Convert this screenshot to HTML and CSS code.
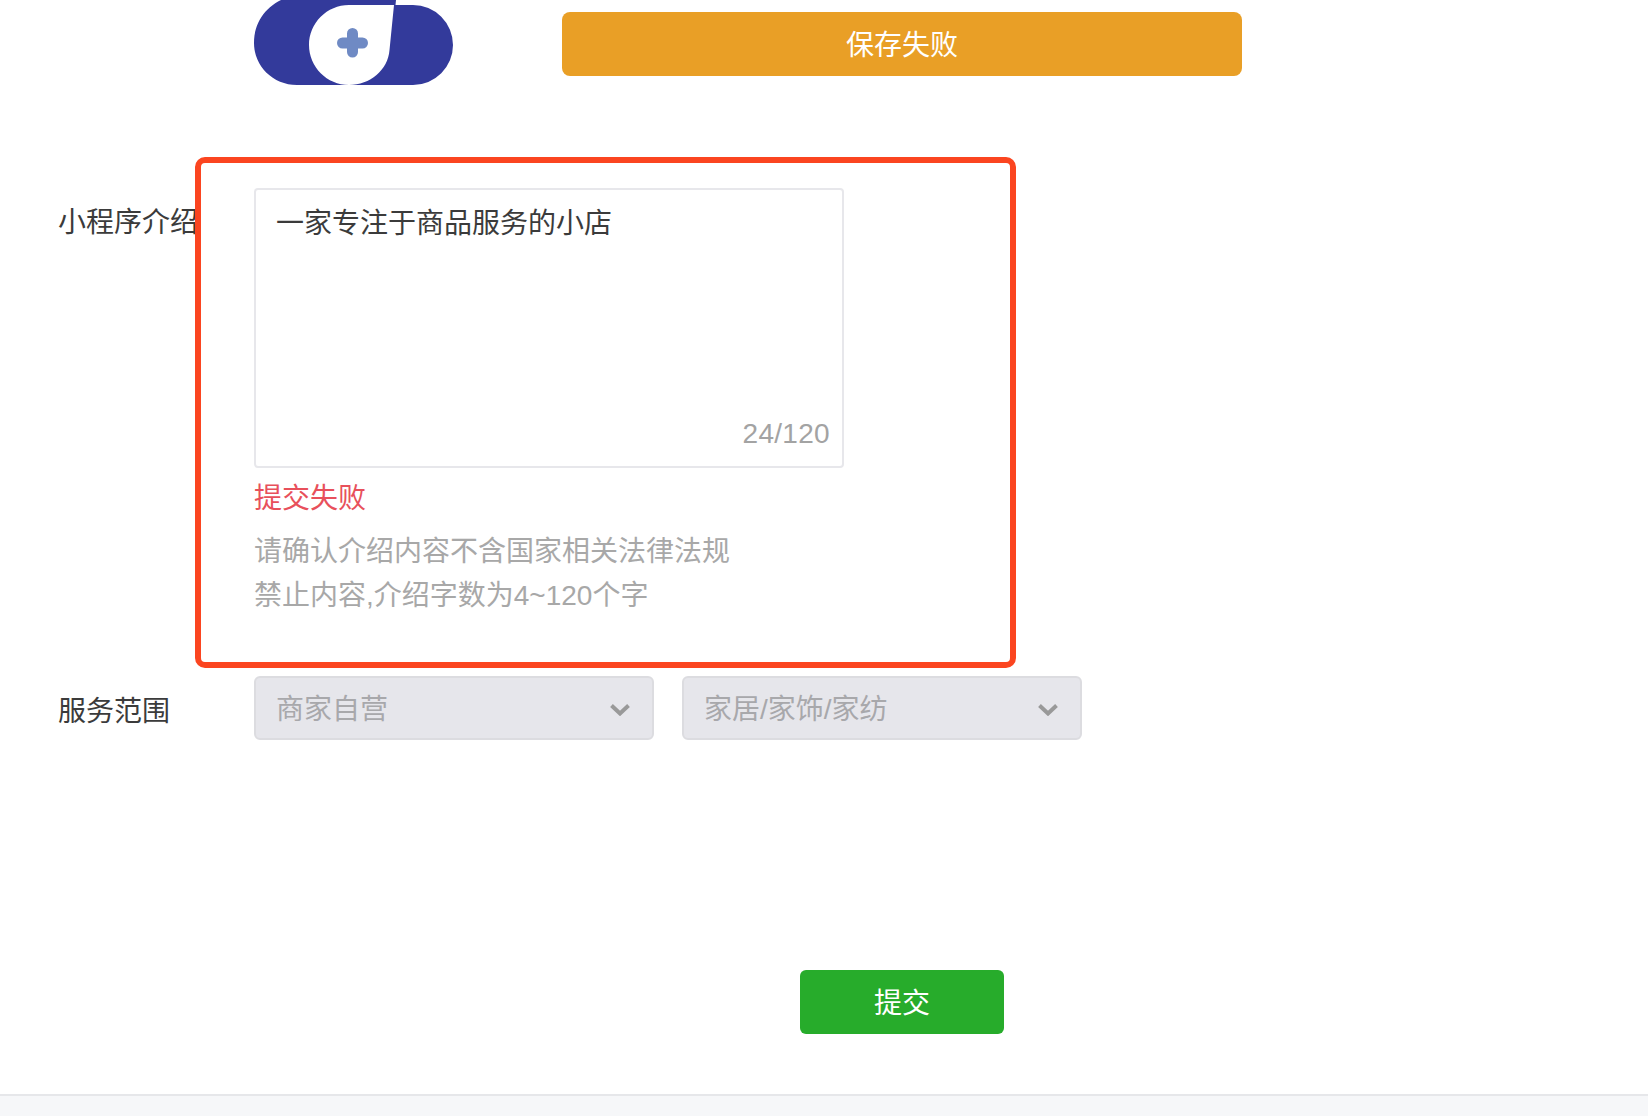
FILE: index.html
```html
<!DOCTYPE html>
<html lang="zh-CN">
<head>
	<meta charset="UTF-8">
	<title>小程序信息</title>
	<link rel="stylesheet" href="styles.css">
</head>
<body>
	<div class="page">
		<div class="logo-row">
			<svg class="logo" width="200" height="86" viewBox="254 0 200 86">
				<path fill="#333a9b" d="M297 85C273 85 254 66 254 43C254 23 265 8 281 0H396L395.5 5H413A40 40 0 0 1 413 85Z"/>
				<path fill="#fff" d="M349 5H394L389.5 50C388 70 370 85 349 85C327 85 309 67 309 45C309 23 327 5 349 5Z"/>
				<path fill="none" stroke="#6f8ac4" stroke-width="11" stroke-linecap="round" d="M342.5 43H362.5M352.5 33.5V52"/>
			</svg>
			<div class="save-status">保存失败</div>
		</div>

		<div class="form-row intro-row">
			<div class="form-label">小程序介绍</div>
			<div class="form-field">
				<div class="textarea-box">
					<div class="textarea-text">一家专注于商品服务的小店</div>
					<div class="textarea-count">24/120</div>
				</div>
				<div class="error-tip">提交失败</div>
				<div class="help-tip">请确认介绍内容不含国家相关法律法规<br>禁止内容,介绍字数为4~120个字</div>
			</div>
		</div>

		<div class="form-row scope-row">
			<div class="form-label">服务范围</div>
			<div class="select-group">
				<div class="select-box">
					<span class="select-text">商家自营</span>
					<svg class="select-arrow" width="20" height="12" viewBox="0 0 20 12"><path fill="none" stroke="#999" stroke-width="4" d="M1.5 1.5L10 9.5L18.5 1.5"/></svg>
				</div>
				<div class="select-box">
					<span class="select-text">家居/家饰/家纺</span>
					<svg class="select-arrow" width="20" height="12" viewBox="0 0 20 12"><path fill="none" stroke="#999" stroke-width="4" d="M1.5 1.5L10 9.5L18.5 1.5"/></svg>
				</div>
			</div>
		</div>

		<div class="submit-row">
			<button class="submit-btn">提交</button>
		</div>

		<div class="footer"></div>

		<div class="mark-box"></div>
	</div>
</body>
</html>
```

FILE: styles.css
```css
html,body{
	margin: 0;
	padding: 0;
	background: #fff;
}
.page{
	position: relative;
	display: flex;
	flex-direction: column;
	width: 1648px;
	height: 1116px;
	overflow: hidden;
	font-family: "Liberation Sans", "Noto Sans CJK SC", sans-serif;
	font-size: 28px;
	line-height: 44px;
	color: #3b3b3b;
}
.logo-row{
	display: flex;
	align-items: flex-start;
	height: 86px;
	padding-left: 254px;
}
.logo{display: block;flex: none;}
.save-status{
	box-sizing: border-box;
	width: 680px;
	height: 64px;
	margin: 12px 0 0 108px;
	padding-top: 2px;
	border-radius: 8px;
	background: #e99f26;
	color: #fff;
	text-align: center;
	line-height: 64px;
}

.form-row{display: flex;align-items: flex-start;}
.form-label{
	flex: none;
	width: 196px;
	padding-left: 58px;
	white-space: nowrap;
}
.intro-row{margin-top: 102px;}
.intro-row .form-label{padding-top: 13px;height: 44px;}
.textarea-box{
	display: flex;
	flex-direction: column;
	justify-content: space-between;
	box-sizing: border-box;
	width: 590px;
	height: 280px;
	padding: 12px 12px 10px 20px;
	border: 2px solid #e7e7eb;
	border-radius: 4px;
}
.textarea-count{align-self: flex-end;color: #a3a3a3;letter-spacing: .3px;}
.error-tip{margin-top: 9px;color: #e8505b;}
.help-tip{margin-top: 9px;color: #a8a8a8;}

.scope-row{margin-top: 58px;align-items: center;height: 64px;}
.scope-row .form-label{padding-top: 8px;}
.select-group{display: flex;gap: 28px;}
.select-box{
	display: flex;
	align-items: center;
	justify-content: space-between;
	box-sizing: border-box;
	width: 400px;
	height: 64px;
	padding: 0 22px 0 20px;
	border: 2px solid #dcdce0;
	border-radius: 6px;
	background: #e6e6eb;
	color: #a8a8ab;
}
.select-text{padding-top: 4px;}
.select-arrow{display: block;margin-top: 4px;}

.submit-row{margin-top: 230px;padding-left: 800px;}
.submit-btn{
	display: block;
	width: 204px;
	height: 64px;
	padding: 4px 0 0;
	border: 0;
	border-radius: 6px;
	background: #27ac2b;
	color: #fff;
	font: inherit;
	line-height: 60px;
}

.footer{
	box-sizing: border-box;
	height: 22px;
	margin-top: 60px;
	border-top: 2px solid #e6e7ea;
	background: #f6f7f9;
}

/* red annotation over the form */
.mark-box{
	position: absolute;
	left: 195px;
	top: 157px;
	box-sizing: border-box;
	width: 821px;
	height: 511px;
	border: 6px solid #fb4520;
	border-radius: 10px;
}
```
